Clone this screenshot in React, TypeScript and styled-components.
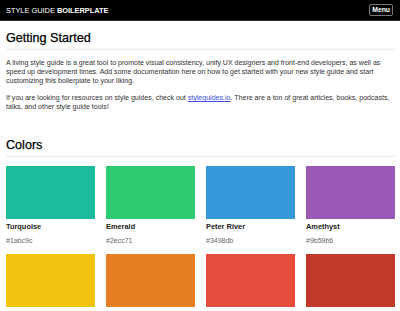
import React from "react";
import styled, { createGlobalStyle } from "styled-components";

const Global = createGlobalStyle`
  html, body { margin: 0; padding: 0; background: #fff; }
  body { font-family: "Liberation Sans", Arial, Helvetica, sans-serif; color: #222; }
  * { box-sizing: border-box; }
`;

const Header = styled.header`
  height: 21px;
  background: #000;
  border-bottom: 1px solid #2a2a2a;
  display: flex;
  align-items: center;
  justify-content: space-between;
  padding: 0 7px 0 6px;
`;

const Brand = styled.div`
  color: #fff;
  font-size: 7.4px;
  text-transform: uppercase;
  b { font-weight: 700; }
`;

const MenuButton = styled.button`
  font-family: inherit;
  font-size: 6.8px;
  font-weight: 700;
  color: #fff;
  background: #000;
  border: 1px solid #777;
  border-radius: 2px;
  height: 12px;
  padding: 0 2px;
  line-height: 10px;
  cursor: pointer;
`;

const Main = styled.main`
  padding: 0 5px 0 6px;
`;

const Section = styled.section<{ $top: number }>`
  margin-top: ${(p) => p.$top}px;
`;

const Heading = styled.h2`
  margin: 0;
  font-size: 12.6px;
  font-weight: 400;
  line-height: 15px;
  color: #000;
  -webkit-text-stroke: 0.25px #000;
  padding-bottom: 3px;
  border-bottom: 1px solid #ececec;
`;

const Para = styled.p`
  margin: 8px 0 0;
  font-size: 7.05px;
  line-height: 9px;
  color: #333;
  a { color: #3d4fe0; }
`;

const Grid = styled.div`
  display: grid;
  grid-template-columns: repeat(4, 89px);
  column-gap: 11px;
  row-gap: 9px;
  margin-top: 9px;
`;

const Swatch = styled.div<{ $c: string }>`
  height: 53px;
  background: ${(p) => p.$c};
`;

const Name = styled.div`
  margin-top: 3px;
  font-size: 7.4px;
  font-weight: 700;
  line-height: 9px;
  color: #222;
`;

const Hex = styled.div`
  margin-top: 5px;
  font-size: 7px;
  line-height: 9px;
  color: #666;
`;

const colors = [
  { name: "Turquoise", hex: "#1abc9c" },
  { name: "Emerald", hex: "#2ecc71" },
  { name: "Peter River", hex: "#3498db" },
  { name: "Amethyst", hex: "#9b59b6" },
  { name: "Sun Flower", hex: "#f1c40f" },
  { name: "Carrot", hex: "#e67e22" },
  { name: "Alizarin", hex: "#e74c3c" },
  { name: "Pomegranate", hex: "#c0392b" },
];

export default function App() {
  return (
    <>
      <Global />
      <Header>
        <Brand>
          Style Guide <b>Boilerplate</b>
        </Brand>
        <MenuButton>Menu</MenuButton>
      </Header>
      <Main>
        <Section $top={10}>
          <Heading>Getting Started</Heading>
          <Para>
            A living style guide is a great tool to promote visual consistency, unify UX designers and
            front-end developers, as well as speed up development times. Add some documentation here on
            how to get started with your new style guide and start customizing this boilerplate to your
            liking.
          </Para>
          <Para>
            If you are looking for resources on style guides, check out{" "}
            <a href="#">styleguides.io</a>. There are a ton of great articles, books, podcasts, talks,
            and other style guide tools!
          </Para>
        </Section>
        <Section $top={27}>
          <Heading>Colors</Heading>
          <Grid>
            {colors.map((c) => (
              <div key={c.hex}>
                <Swatch $c={c.hex} />
                <Name>{c.name}</Name>
                <Hex>{c.hex}</Hex>
              </div>
            ))}
          </Grid>
        </Section>
      </Main>
    </>
  );
}
